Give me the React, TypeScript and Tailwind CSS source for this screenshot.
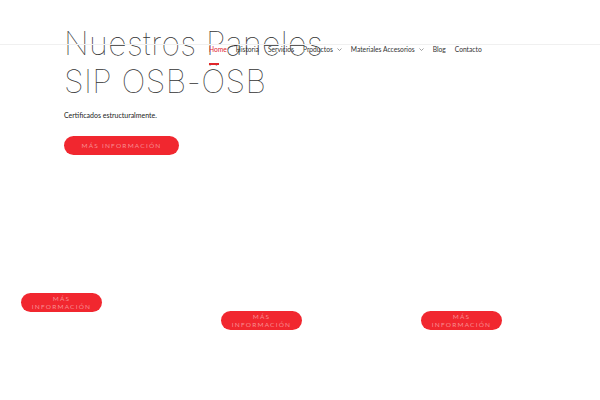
import React from "react";

const navItems: { label: string; caret?: boolean; active?: boolean }[] = [
    { label: "Home", active: true },
    { label: "Historia" },
    { label: "Servicios" },
    { label: "Productos", caret: true },
    { label: "Materiales Accesorios", caret: true },
    { label: "Blog" },
    { label: "Contacto" },
];

function Caret() {
    return (
        <svg width="5" height="3" viewBox="0 0 5 3" className="ml-[4px]">
            <path d="M0.5 0.5 L2.5 2.5 L4.5 0.5" fill="none" stroke="#777" strokeWidth="0.7" />
        </svg>
    );
}

function Header() {
    return (
        <div className="absolute top-0 left-0 right-0 z-10 pointer-events-none">
            <div className="h-[45px] border-b border-[#f0f0f0]" />
            <nav className="flex items-start pl-[209px] text-[6.7px] leading-[9px] text-[#333]">
                {navItems.map((item) => (
                    <div key={item.label} className="flex flex-col mr-[9px]">
                        <div className="flex items-center">
                            <span className={item.active ? "text-[#e0262c]" : ""}>{item.label}</span>
                            {item.caret && <Caret />}
                        </div>
                        {item.active && <div className="mt-[9px] h-[1.5px] w-[10px] bg-[#e0262c]" />}
                    </div>
                ))}
            </nav>
        </div>
    );
}

function InfoButton({ className, twoLine }: { className?: string; twoLine?: boolean }) {
    return (
        <button
            className={
                "rounded-full bg-[#f1272f] text-[#f88e92] uppercase tracking-[1.2px] text-[6.5px] leading-[8px] flex flex-col items-center justify-center " +
                (className ?? "")
            }
        >
            {twoLine ? (
                <>
                    <span>Más</span>
                    <span>Información</span>
                </>
            ) : (
                <span>Más Información</span>
            )}
        </button>
    );
}

export default function App() {
    return (
        <div
            className="relative w-[600px] h-[400px] overflow-hidden bg-white"
            style={{ fontFamily: "Lato, 'Liberation Sans', sans-serif" }}
        >
            <Header />
            <section className="pl-[64px] pt-[25px]">
                <h1
                    className="text-[32px] leading-[38px] font-[100] text-[#333] tracking-[0.4px]"
                    style={{ fontFamily: "Inter, 'Noto Sans', sans-serif" }}
                >
                    Nuestros Paneles
                    <br />
                    SIP OSB-ÖSB
                </h1>
                <p className="mt-[9px] text-[7px] leading-[10px] text-[#222]">Certificados estructuralmente.</p>
                <InfoButton className="mt-[16px] w-[115px] h-[19px]" />
            </section>
            <section className="grid grid-cols-3 mt-[138px]">
                <div className="pl-[21px]">
                    <InfoButton twoLine className="w-[81px] h-[19px]" />
                </div>
                <div className="pl-[21px] pt-[18px]">
                    <InfoButton twoLine className="w-[81px] h-[19px]" />
                </div>
                <div className="pl-[21px] pt-[18px]">
                    <InfoButton twoLine className="w-[81px] h-[19px]" />
                </div>
            </section>
        </div>
    );
}
